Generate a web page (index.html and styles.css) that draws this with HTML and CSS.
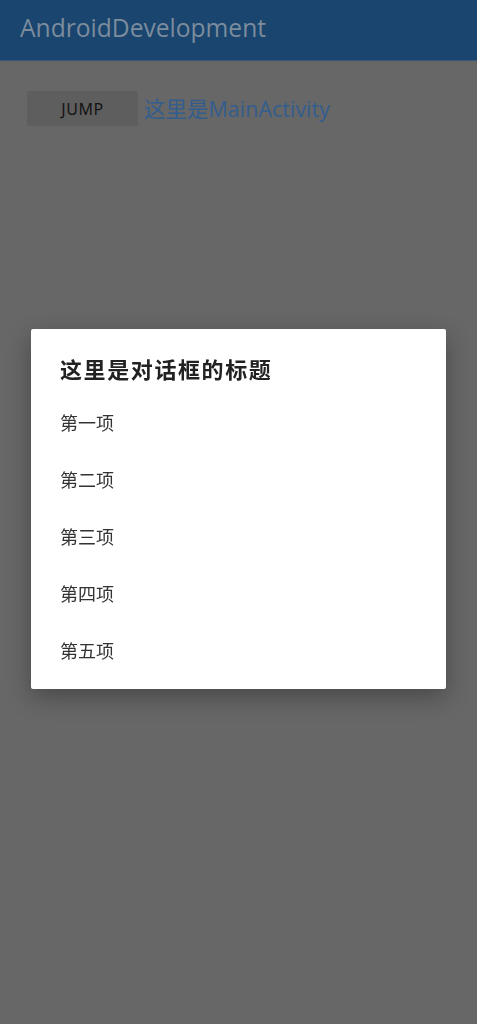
FILE: index.html
```html
<!DOCTYPE html>
<html lang="zh">
<head>
<meta charset="utf-8">
<link rel="stylesheet" href="styles.css">
</head>
<body>
<header class="appbar"><span class="apptitle">AndroidDevelopment</span></header>
<main class="content">
  <div class="row">
    <div class="btn">JUMP</div>
    <span class="label">这里是MainActivity</span>
  </div>
</main>
<div class="scrim">
  <div class="dialog">
    <div class="dtitle">这里是对话框的标题</div>
    <div class="item">第一项</div>
    <div class="item">第二项</div>
    <div class="item">第三项</div>
    <div class="item">第四项</div>
    <div class="item">第五项</div>
  </div>
</div>
</body>
</html>
```
FILE: styles.css
```css
html, body { margin: 0; padding: 0; }
body {
  width: 477px;
  height: 1024px;
  background: #676767;
  font-family: "Noto Sans", "Noto Sans CJK SC", sans-serif;
  overflow: hidden;
}
.appbar {
  height: 61px;
  background: #19456f;
  display: flex;
  align-items: center;
  padding: 0 0 6px 20px;
  box-sizing: border-box;
  border-bottom: 1px solid #355a7d;
}
.apptitle {
  color: #7c8c9d;
  font-size: 24.6px;
  font-family: "Open Sans", "Noto Sans", sans-serif;
}
.content { padding: 30px 0 0 27px; }
.row { display: flex; align-items: center; }
.btn {
  width: 111px;
  height: 35px;
  background: #5e5e5e;
  color: #141414;
  font-size: 16px;
  letter-spacing: 0.5px;
  display: flex;
  align-items: center;
  justify-content: center;
  border-radius: 2px;
  font-family: "Noto Sans", sans-serif;
}
.label {
  margin-left: 6px;
  margin-top: -3px;
  color: #335d8e;
  font-size: 21.5px;
  font-family: "Open Sans", "Noto Sans CJK SC", sans-serif;
}
.scrim {
  position: fixed;
  inset: 0;
  display: flex;
  justify-content: center;
  align-items: flex-start;
  padding-top: 329px;
}
.dialog {
  width: 415px;
  height: 360px;
  background: #ffffff;
  border-radius: 2px;
  box-shadow: 0 8px 24px rgba(0,0,0,0.3);
  box-sizing: border-box;
  padding: 24px 0 0 29px;
  font-family: "Noto Sans CJK SC", sans-serif;
}
.dtitle {
  font-size: 22px;
  font-weight: 700;
  letter-spacing: 1.6px;
  color: #222;
  height: 30px;
  line-height: 30px;
  margin-bottom: 22px;
}
.item {
  font-size: 18px;
  color: #333;
  height: 57px;
  line-height: 24px;
  padding-top: 5px;
  box-sizing: border-box;
}
```
